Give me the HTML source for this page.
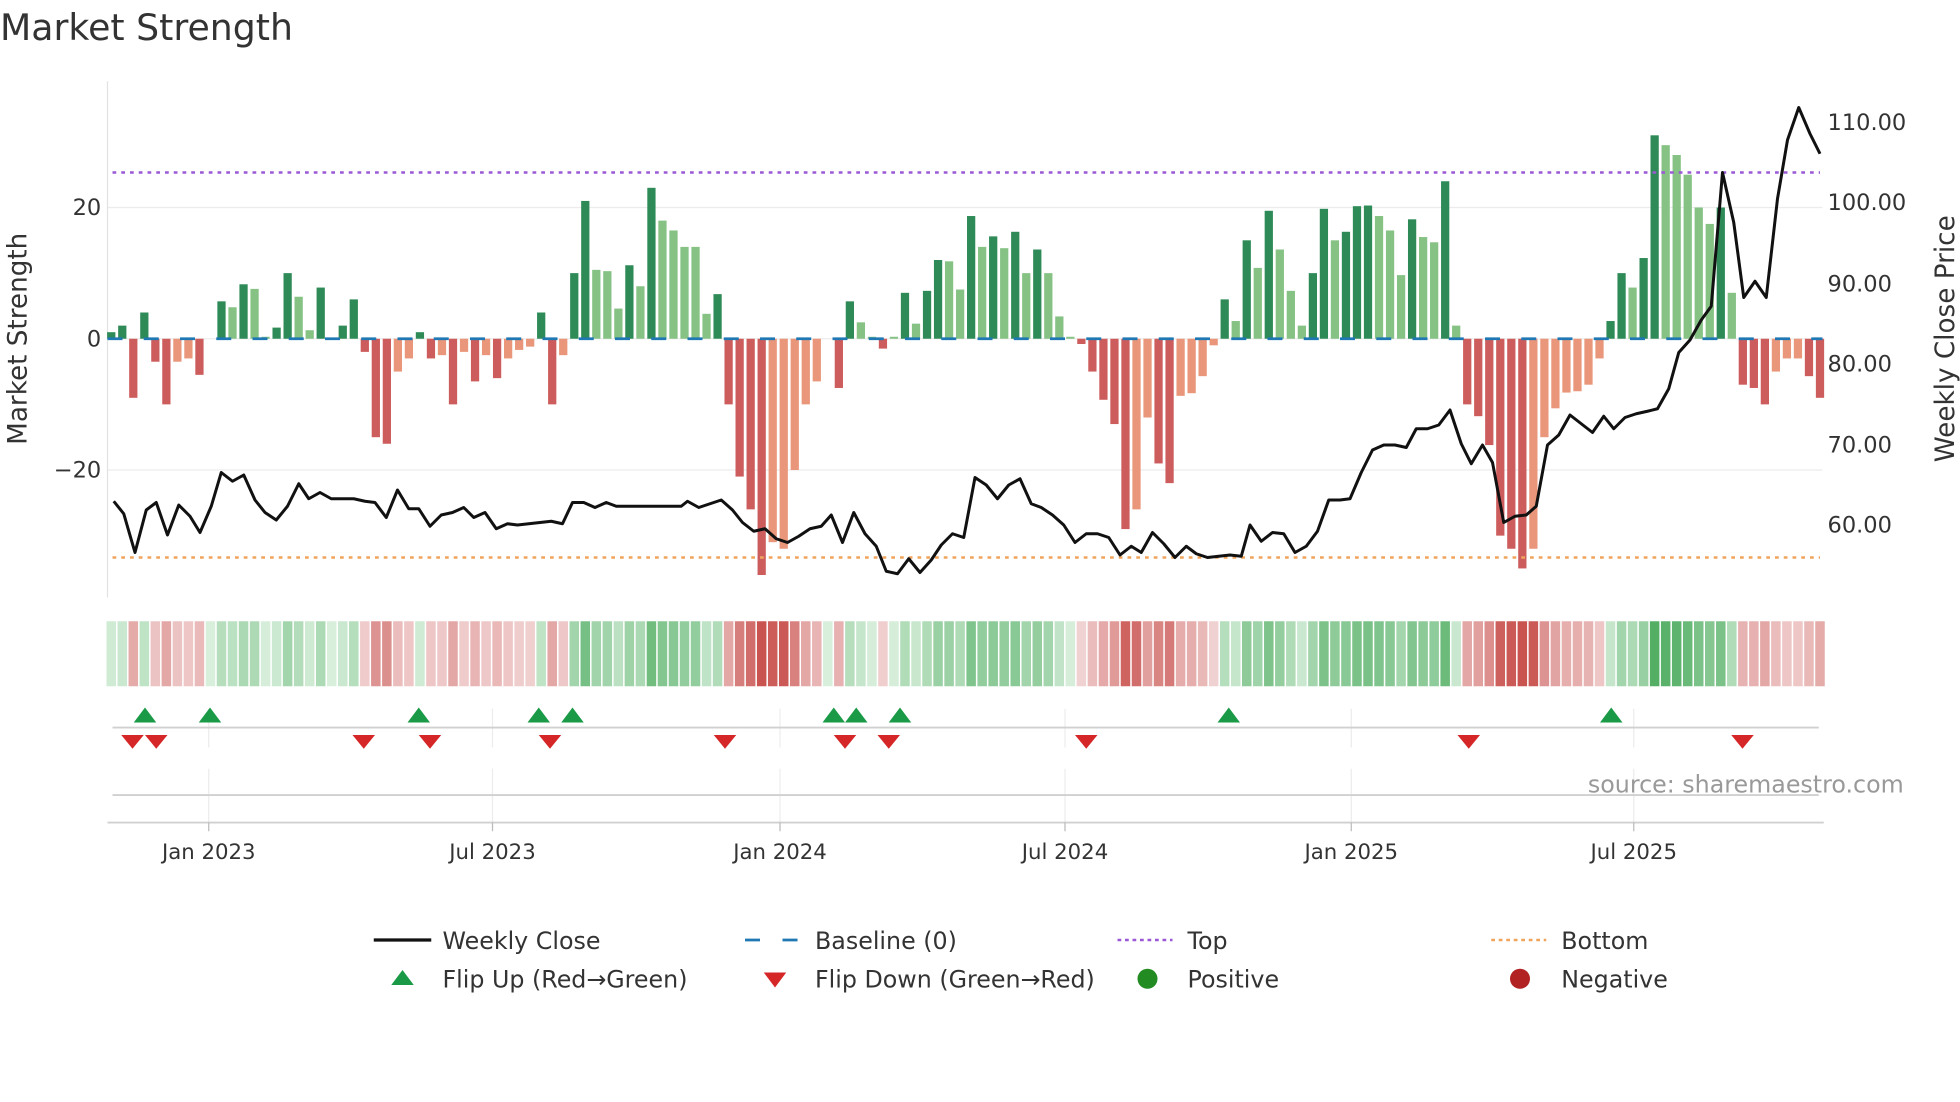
<!DOCTYPE html>
<html><head><meta charset="utf-8"><style>
html,body{margin:0;padding:0;background:#fff;}
svg{display:block;font-family:"DejaVu Sans","Liberation Sans",sans-serif;}
</style></head><body>
<svg id="s" width="1960" height="1102" viewBox="0 0 1568 881.6" xmlns="http://www.w3.org/2000/svg">
<rect width="1568" height="882" fill="#fff"/>
<text x="0" y="32" font-size="29" fill="#333">Market Strength</text>
<g stroke="#ececec" stroke-width="1">
<line x1="86" y1="166" x2="1458" y2="166"/><line x1="86" y1="271" x2="1458" y2="271"/><line x1="86" y1="376" x2="1458" y2="376"/>
</g>
<line x1="86" y1="65" x2="86" y2="478" stroke="#e2e2e2" stroke-width="1"/>
<g font-size="18" fill="#333" text-anchor="end">
<text x="81" y="172">20</text><text x="81" y="277">0</text><text x="81" y="382">−20</text>
</g>
<g font-size="18" fill="#333">
<text x="1462" y="104">110.00</text><text x="1462" y="168">100.00</text><text x="1462" y="233">90.00</text><text x="1462" y="297">80.00</text><text x="1462" y="362">70.00</text><text x="1462" y="426">60.00</text>
</g>
<text transform="translate(21,271) rotate(-90)" font-size="21" fill="#333" text-anchor="middle">Market Strength</text>
<text transform="translate(1563,271) rotate(-90)" font-size="21" fill="#333" text-anchor="middle">Weekly Close Price</text>
<g id="bars"></g>
<line x1="86" y1="271" x2="1458" y2="271" stroke="#1f77b4" stroke-width="2.2" stroke-dasharray="12 17"/>
<line x1="90" y1="138" x2="1456" y2="138" stroke="#9b59d6" stroke-width="2" stroke-dasharray="3 4"/>
<line x1="90" y1="446" x2="1456" y2="446" stroke="#f0a45c" stroke-width="2" stroke-dasharray="3 4"/>
<polyline fill="none" stroke="#111" stroke-width="2.4" stroke-linejoin="round" points="91,401 99,411 108,442 117,408 125,402 134,428 143,404 152,413 160,426 169,405 177,378 186,385 195,380 204,400 212,410 221,416 230,405 239,387 247,399 256,394 265,399 274,399 283,399 292,401 300,402 309,414 318,392 327,407 335,407 344,421 353,412 362,410 371,406 379,414 388,410 397,423 406,419 414,420 423,419 432,418 441,417 450,419 458,402 467,402 476,406 485,402 493,405 502,405 545,405 550,401 559,406 568,403 577,400 586,408 594,418 603,425 612,423 621,431 630,434 639,429 648,423 657,421 665,412 674,434 683,410 692,427 701,437 709,457 718,459 727,447 736,458 745,448 753,436 762,427 771,430 780,382 789,388 798,399 807,388 816,383 825,403 833,406 842,412 851,420 860,434 869,427 878,427 887,430 896,444 905,437 913,442 922,426 931,435 940,446 949,437 957,443 966,446 975,445 984,444 993,445 1000,420 1009,433 1018,426 1027,427 1036,442 1045,437 1054,425 1063,400 1072,400 1080,399 1089,378 1098,360 1107,356 1116,356 1125,358 1133,343 1142,343 1151,340 1160,328 1169,355 1177,371 1186,356 1194,370 1203,418 1212,413 1221,412 1229,405 1238,356 1247,348 1256,332 1265,339 1274,346 1283,333 1291,343 1300,334 1309,331 1318,329 1326,327 1335,311 1343,282 1352,272 1361,256 1369,245 1378,138 1387,178 1395,238 1404,225 1413,238 1422,159 1430,112 1439,86 1448,107 1456,123"/>
<g id="heat"></g>
<g stroke="#ececec" stroke-width="1">
<line x1="167" y1="567" x2="167" y2="598"/><line x1="394" y1="567" x2="394" y2="598"/><line x1="624" y1="567" x2="624" y2="598"/><line x1="852" y1="567" x2="852" y2="598"/><line x1="1081" y1="567" x2="1081" y2="598"/><line x1="1307" y1="567" x2="1307" y2="598"/>
<line x1="167" y1="615" x2="167" y2="658"/><line x1="394" y1="615" x2="394" y2="658"/><line x1="624" y1="615" x2="624" y2="658"/><line x1="852" y1="615" x2="852" y2="658"/><line x1="1081" y1="615" x2="1081" y2="658"/><line x1="1307" y1="615" x2="1307" y2="658"/>
</g>
<line x1="90" y1="582" x2="1455" y2="582" stroke="#d0d0d0" stroke-width="1.5"/>
<line x1="90" y1="636" x2="1455" y2="636" stroke="#d0d0d0" stroke-width="1.5"/>
<line x1="86" y1="658" x2="1459" y2="658" stroke="#d0d0d0" stroke-width="1.5"/>
<g stroke="#bbb" stroke-width="1"><line x1="167" y1="658" x2="167" y2="665"/><line x1="394" y1="658" x2="394" y2="665"/><line x1="624" y1="658" x2="624" y2="665"/><line x1="852" y1="658" x2="852" y2="665"/><line x1="1081" y1="658" x2="1081" y2="665"/><line x1="1307" y1="658" x2="1307" y2="665"/></g>
<g id="mk"></g>
<text x="1523" y="634" font-size="19" fill="#999" text-anchor="end">source: sharemaestro.com</text>
<g font-size="17" fill="#333" text-anchor="middle">
<text x="167" y="687">Jan 2023</text><text x="394" y="687">Jul 2023</text><text x="624" y="687">Jan 2024</text><text x="852" y="687">Jul 2024</text><text x="1081" y="687">Jan 2025</text><text x="1307" y="687">Jul 2025</text>
</g>
<g font-size="19" fill="#333">
<line x1="299" y1="752" x2="345" y2="752" stroke="#111" stroke-width="2.6"/><text x="354" y="759">Weekly Close</text>
<line x1="596" y1="752" x2="640" y2="752" stroke="#1f77b4" stroke-width="2.2" stroke-dasharray="12 18"/><text x="652" y="759">Baseline (0)</text>
<line x1="894" y1="752" x2="938" y2="752" stroke="#9b59d6" stroke-width="2" stroke-dasharray="3 3"/><text x="950" y="759">Top</text>
<line x1="1193" y1="752" x2="1237" y2="752" stroke="#f0a45c" stroke-width="2" stroke-dasharray="3 3"/><text x="1249" y="759">Bottom</text>
<polygon points="313,788 331,788 322,776" fill="#1a9a46"/><text x="354" y="790">Flip Up (Red→Green)</text>
<polygon points="611,778 629,778 620,790" fill="#d62728"/><text x="652" y="790">Flip Down (Green→Red)</text>
<circle cx="918" cy="783" r="8" fill="#228b22"/><text x="950" y="790">Positive</text>
<circle cx="1216" cy="783" r="8" fill="#b22222"/><text x="1249" y="790">Negative</text>
</g>
</svg>
<script>
var D=[[1,'g'],[2,'g'],[-9,'r'],[4,'g'],[-3.5,'r'],[-10,'r'],[-3.5,'s'],[-3,'s'],[-5.5,'r'],[0,'l'],
[5.7,'g'],[4.8,'l'],[8.3,'g'],[7.6,'l'],[0.3,'l'],[1.7,'g'],[10,'g'],[6.4,'l'],[1.3,'l'],[7.8,'g'],
[0,'l'],[2,'g'],[6,'g'],[-2,'r'],[-15,'r'],[-16,'r'],[-5,'s'],[-3,'s'],[1,'g'],[-3,'r'],
[-2.5,'s'],[-10,'r'],[-2,'s'],[-6.5,'r'],[-2.5,'s'],[-6,'r'],[-3,'s'],[-1.7,'s'],[-1.2,'s'],[4,'g'],
[-10,'r'],[-2.5,'s'],[10,'g'],[21,'g'],[10.5,'l'],[10.3,'l'],[4.6,'l'],[11.2,'g'],[8,'l'],[23,'g'],
[18,'l'],[16.5,'l'],[14,'l'],[14,'l'],[3.8,'l'],[6.8,'g'],[-10,'r'],[-21,'r'],[-26,'r'],[-36,'r'],
[-31,'s'],[-32,'s'],[-20,'s'],[-10,'s'],[-6.5,'s'],[0,'s'],[-7.5,'r'],[5.7,'g'],[2.5,'l'],[0.3,'l'],
[-1.5,'r'],[0.3,'l'],[7,'g'],[2.3,'l'],[7.3,'g'],[12,'g'],[11.8,'l'],[7.5,'l'],[18.7,'g'],[14,'l'],
[15.6,'g'],[13.8,'l'],[16.3,'g'],[10,'l'],[13.6,'g'],[10,'l'],[3.4,'l'],[0.3,'l'],[-0.8,'r'],[-5,'r'],
[-9.3,'r'],[-13,'r'],[-29,'r'],[-26,'s'],[-12,'s'],[-19,'r'],[-22,'r'],[-8.7,'s'],[-8.3,'s'],[-5.7,'s'],
[-1,'s'],[6,'g'],[2.7,'l'],[15,'g'],[10.8,'l'],[19.5,'g'],[13.6,'l'],[7.3,'l'],[2,'l'],[10,'g'],
[19.8,'g'],[15,'l'],[16.3,'g'],[20.2,'g'],[20.3,'g'],[18.7,'l'],[16.5,'l'],[9.7,'l'],[18.2,'g'],[15.5,'l'],
[14.7,'l'],[24,'g'],[2,'l'],[-10,'r'],[-11.8,'r'],[-16.2,'r'],[-30,'r'],[-32,'r'],[-35,'r'],[-32,'s'],
[-15,'s'],[-10.6,'s'],[-8.2,'s'],[-8,'s'],[-7,'s'],[-3,'s'],[2.7,'g'],[10,'g'],[7.8,'l'],[12.3,'g'],
[31,'g'],[29.5,'l'],[28,'l'],[25,'l'],[20,'l'],[17.5,'l'],[20,'g'],[7,'l'],[-7,'r'],[-7.5,'r'],
[-10,'r'],[-5,'s'],[-3,'s'],[-3,'s'],[-5.7,'r'],[-9,'r']];
var C={g:'#2e8b57',l:'#85c284',r:'#cd5c5c',s:'#e9967a'};
var NS='http://www.w3.org/2000/svg',bars=document.getElementById('bars'),heat=document.getElementById('heat'),mk=document.getElementById('mk');
function el(p,t,a){var e=document.createElementNS(NS,t);for(var k in a)e.setAttribute(k,a[k]);p.appendChild(e);return e;}
function mix(a,b,t){var r='#';for(var i=0;i<3;i++){var x=parseInt(a.substr(1+2*i,2),16),y=parseInt(b.substr(1+2*i,2),16);var v=Math.round(x+(y-x)*t).toString(16);r+=(v.length<2?'0':'')+v;}return r;}
var n=D.length,x0=89,dx=(1456-89)/(n-1),k=5.25;
for(var i=0;i<n;i++){var v=D[i][0],x=x0+dx*i,h=Math.abs(v)*k;
 if(h>0.3)el(bars,'rect',{x:x-3.3,y:v>0?271-h:271,width:6.6,height:h,fill:C[D[i][1]]});
 var t=Math.min(Math.abs(v)/34,1);t=Math.pow(t,0.8);
 var col=v>=0?mix('#d8efdc','#4aaa5c',t):mix('#f3d9d9','#c9534f',t);
 el(heat,'rect',{x:x-3.8,y:497,width:7.6,height:52,fill:col});}
var up=[116,168,335,431,458,667,685,720,983,1289],dn=[106,125,291,344,440,580,676,711,869,1175,1394];
up.forEach(function(x){el(mk,'polygon',{points:(x-9)+',578 '+(x+9)+',578 '+x+',566',fill:'#1a9a46'});});
dn.forEach(function(x){el(mk,'polygon',{points:(x-9)+',588 '+(x+9)+',588 '+x+',599',fill:'#d62728'});});
</script>
</body></html>
